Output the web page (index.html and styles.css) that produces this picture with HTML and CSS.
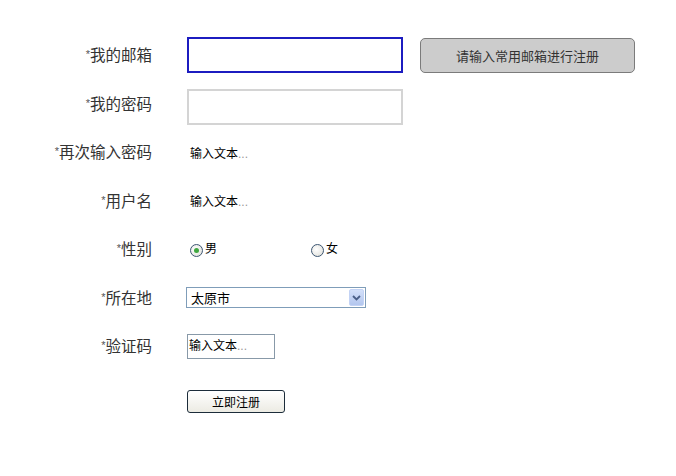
FILE: index.html
```html
<!DOCTYPE html>
<html lang="zh-CN">
<head>
<meta charset="utf-8">
<title>注册</title>
<link rel="stylesheet" href="styles.css">
</head>
<body>
<form class="form">
  <label class="lbl"><span class="req">*</span>我的邮箱</label>
  <div class="field">
    <input class="box box-focus" type="text">
    <button type="button" class="hint-btn">请输入常用邮箱进行注册</button>
  </div>

  <label class="lbl"><span class="req">*</span>我的密码</label>
  <div class="field"><input class="box box-low" type="password"></div>

  <label class="lbl"><span class="req">*</span>再次输入密码</label>
  <div class="field"><span class="plain">输入文本<span class="dots">...</span></span></div>

  <label class="lbl"><span class="req">*</span>用户名</label>
  <div class="field"><span class="plain">输入文本<span class="dots">...</span></span></div>

  <label class="lbl"><span class="req">*</span>性别</label>
  <div class="field radios">
    <span class="radio-item"><span class="radio checked"></span><span class="rtext">男</span></span>
    <span class="radio-item second"><span class="radio"></span><span class="rtext">女</span></span>
  </div>

  <label class="lbl"><span class="req">*</span>所在地</label>
  <div class="field">
    <div class="select">
      <span class="sel-text">太原市</span>
      <span class="sel-arrow">
        <svg width="9" height="6" viewBox="0 0 9 6"><path d="M1 1 L4.5 4.5 L8 1" fill="none" stroke="#4a5f88" stroke-width="1.8"/></svg>
      </span>
    </div>
  </div>

  <label class="lbl"><span class="req">*</span>验证码</label>
  <div class="field"><div class="captcha">输入文本<span class="dots">...</span></div></div>

  <span></span>
  <div class="field"><button type="button" class="submit">立即注册</button></div>
</form>
</body>
</html>
```
FILE: styles.css
```css
* { box-sizing: border-box; }
html, body { margin: 0; padding: 0; background: #fff; }
body {
  font-family: "Liberation Sans", "Noto Sans CJK SC", sans-serif;
  color: #000;
}
.form {
  display: grid;
  grid-template-columns: 152px 1fr;
  grid-template-rows: repeat(7, 48.5px) 62px;
  column-gap: 34px;
  align-items: center;
  padding-top: 31px;
}
.lbl {
  text-align: right;
  font-size: 15.5px;
  color: #333;
  white-space: nowrap;
  line-height: 18px;
}
.req {
  font-size: 11px;
  color: #555;
  vertical-align: 3px;
}
.field {
  display: flex;
  align-items: center;
}
.box {
  width: 216px;
  height: 36px;
  border: 2px solid #d4d4d4;
  background: #fff;
  margin: 0 0 0 1px;
  padding: 0 4px;
  outline: none;
}
.box-low { margin-top: 7px; }
.box-focus { border-color: #1c1cc0; }
.hint-btn {
  margin-left: 17px;
  width: 215px;
  height: 35px;
  background: #cccccc;
  border: 1px solid #7b7b7b;
  border-radius: 5px;
  font-family: "Liberation Sans", "Noto Sans CJK SC", sans-serif;
  font-size: 13px;
  color: #333;
  padding: 0;
}
.plain {
  font-size: 12px;
  padding-left: 4px;
  color: #000;
}
.dots { color: #999; }
.radios { padding-left: 4px; }
.radio-item { display: flex; align-items: center; }
.radio-item.second { margin-left: 94px; }
.radio {
  width: 13px;
  height: 13px;
  border-radius: 50%;
  border: 1px solid #3d5672;
  background: radial-gradient(circle at 40% 40%, #ffffff, #dcdcd6);
  display: inline-flex;
  align-items: center;
  justify-content: center;
  margin-top: 2px;
}
.radio.checked::after {
  content: "";
  width: 5px;
  height: 5px;
  border-radius: 50%;
  background: #3fa73f;
}
.rtext {
  font-size: 12px;
  margin-left: 2px;
  margin-top: -3px;
}
.select {
  width: 180px;
  height: 21px;
  border: 1px solid #7f9db9;
  display: flex;
  align-items: center;
  padding: 1px;
  background: #fff;
}
.sel-text {
  font-size: 13px;
  padding-left: 3px;
}
.sel-arrow {
  margin-left: auto;
  width: 15px;
  height: 17px;
  background: linear-gradient(#d3e0fa, #b3c6ee);
  border: 1px solid #c3d3f5;
  border-radius: 2px;
  display: flex;
  align-items: center;
  justify-content: center;
}
.captcha {
  width: 88px;
  height: 25px;
  margin-left: 1px;
  border: 1px solid #8899a8;
  font-size: 12px;
  line-height: 22px;
  padding-left: 1px;
  color: #000;
}
.submit {
  width: 98px;
  height: 23px;
  margin-left: 1px;
  border: 1px solid #1c2c3a;
  border-radius: 3px;
  background: linear-gradient(#ffffff, #ecebe3);
  font-family: "Liberation Sans", "Noto Sans CJK SC", sans-serif;
  font-size: 12px;
  color: #000;
  padding: 0;
}
```
